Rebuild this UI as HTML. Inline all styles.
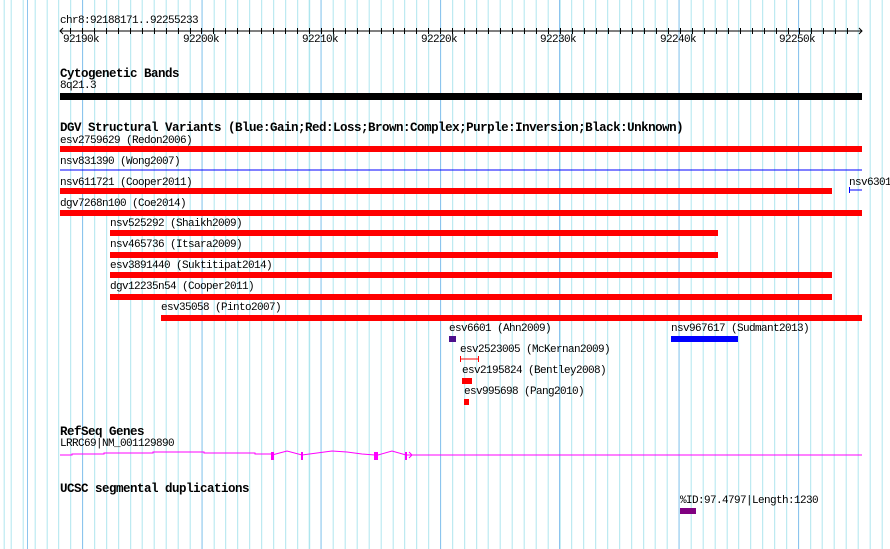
<!DOCTYPE html>
<html><head><meta charset="utf-8"><style>
html,body{margin:0;padding:0}
body{width:890px;height:549px;position:relative;overflow:hidden;background:#fff;font-family:"Liberation Mono","DejaVu Sans Mono",monospace;font-size:11px;letter-spacing:-0.6px;color:#000}
#grid{position:absolute;left:0;top:0;width:890px;height:549px;
background-image:repeating-linear-gradient(to right,#8cc4ee 0,#8cc4ee 1px,transparent 1px,transparent 119.3px),repeating-linear-gradient(to right,#aee6ee 0,#aee6ee 1px,transparent 1px,transparent 11.93px);
background-position:82px 0,10.7px 0;}
.t{position:absolute;line-height:11px;white-space:pre}
.h{position:absolute;line-height:13px;font-weight:bold;font-size:12.5px;letter-spacing:-0.5px;white-space:pre}
.b{position:absolute}
</style></head><body>
<div id="grid"></div>
<svg class="b" style="left:0;top:0" width="890" height="549">
<line x1="60" y1="31" x2="862" y2="31" stroke="#000"/>
<path d="M63 28L60 31L63 34M859 28L862 31L859 34" stroke="#000" fill="none"/>
<g stroke="#000">
<line x1="70.5" y1="28" x2="70.5" y2="34"/><line x1="82.5" y1="28" x2="82.5" y2="34"/>
<line x1="94.5" y1="28" x2="94.5" y2="34"/><line x1="106.5" y1="28" x2="106.5" y2="34"/>
<line x1="118.5" y1="28" x2="118.5" y2="34"/><line x1="130.5" y1="28" x2="130.5" y2="34"/>
<line x1="142.5" y1="28" x2="142.5" y2="34"/><line x1="154.5" y1="28" x2="154.5" y2="34"/>
<line x1="166.5" y1="28" x2="166.5" y2="34"/><line x1="178.5" y1="28" x2="178.5" y2="34"/>
<line x1="190.5" y1="28" x2="190.5" y2="34"/><line x1="201.5" y1="28" x2="201.5" y2="34"/>
<line x1="213.5" y1="28" x2="213.5" y2="34"/><line x1="225.5" y1="28" x2="225.5" y2="34"/>
<line x1="237.5" y1="28" x2="237.5" y2="34"/><line x1="249.5" y1="28" x2="249.5" y2="34"/>
<line x1="261.5" y1="28" x2="261.5" y2="34"/><line x1="273.5" y1="28" x2="273.5" y2="34"/>
<line x1="285.5" y1="28" x2="285.5" y2="34"/><line x1="297.5" y1="28" x2="297.5" y2="34"/>
<line x1="309.5" y1="28" x2="309.5" y2="34"/><line x1="321.5" y1="28" x2="321.5" y2="34"/>
<line x1="333.5" y1="28" x2="333.5" y2="34"/><line x1="345.5" y1="28" x2="345.5" y2="34"/>
<line x1="357.5" y1="28" x2="357.5" y2="34"/><line x1="369.5" y1="28" x2="369.5" y2="34"/>
<line x1="381.5" y1="28" x2="381.5" y2="34"/><line x1="393.5" y1="28" x2="393.5" y2="34"/>
<line x1="404.5" y1="28" x2="404.5" y2="34"/><line x1="416.5" y1="28" x2="416.5" y2="34"/>
<line x1="428.5" y1="28" x2="428.5" y2="34"/><line x1="440.5" y1="28" x2="440.5" y2="34"/>
<line x1="452.5" y1="28" x2="452.5" y2="34"/><line x1="464.5" y1="28" x2="464.5" y2="34"/>
<line x1="476.5" y1="28" x2="476.5" y2="34"/><line x1="488.5" y1="28" x2="488.5" y2="34"/>
<line x1="500.5" y1="28" x2="500.5" y2="34"/><line x1="512.5" y1="28" x2="512.5" y2="34"/>
<line x1="524.5" y1="28" x2="524.5" y2="34"/><line x1="536.5" y1="28" x2="536.5" y2="34"/>
<line x1="548.5" y1="28" x2="548.5" y2="34"/><line x1="560.5" y1="28" x2="560.5" y2="34"/>
<line x1="572.5" y1="28" x2="572.5" y2="34"/><line x1="584.5" y1="28" x2="584.5" y2="34"/>
<line x1="596.5" y1="28" x2="596.5" y2="34"/><line x1="608.5" y1="28" x2="608.5" y2="34"/>
<line x1="620.5" y1="28" x2="620.5" y2="34"/><line x1="632.5" y1="28" x2="632.5" y2="34"/>
<line x1="644.5" y1="28" x2="644.5" y2="34"/><line x1="656.5" y1="28" x2="656.5" y2="34"/>
<line x1="668.5" y1="28" x2="668.5" y2="34"/><line x1="680.5" y1="28" x2="680.5" y2="34"/>
<line x1="692.5" y1="28" x2="692.5" y2="34"/><line x1="704.5" y1="28" x2="704.5" y2="34"/>
<line x1="716.5" y1="28" x2="716.5" y2="34"/><line x1="728.5" y1="28" x2="728.5" y2="34"/>
<line x1="740.5" y1="28" x2="740.5" y2="34"/><line x1="752.5" y1="28" x2="752.5" y2="34"/>
<line x1="764.5" y1="28" x2="764.5" y2="34"/><line x1="776.5" y1="28" x2="776.5" y2="34"/>
<line x1="788.5" y1="28" x2="788.5" y2="34"/><line x1="799.5" y1="28" x2="799.5" y2="34"/>
<line x1="811.5" y1="28" x2="811.5" y2="34"/><line x1="823.5" y1="28" x2="823.5" y2="34"/>
<line x1="835.5" y1="28" x2="835.5" y2="34"/><line x1="847.5" y1="28" x2="847.5" y2="34"/>
</g>
<polyline points="60,455 72,455 72,454 104,454 104,453 153,453 153,452 204,452 204,453 255,453 255,454 272,454" stroke="#f0f" fill="none"/>
<polyline points="272,455 287,451 302,455 317,453 332,451 347,452 362,454 375,455" stroke="#f0f" fill="none"/>
<polyline points="378,455 392,451 406,455 862,455" stroke="#f0f" fill="none"/>
<rect x="271" y="452" width="3" height="8" fill="#f0f"/>
<rect x="301" y="452" width="2" height="8" fill="#f0f"/>
<rect x="374" y="452" width="4" height="8" fill="#f0f"/>
<rect x="405" y="452" width="2" height="8" fill="#f0f"/>
<path d="M409 452L412 455L409 458" stroke="#f0f" fill="none"/>
<rect x="449" y="336" width="7" height="6" fill="#4b0f8c"/>
<path d="M460.5 356v6M478.5 356v6M460 359h19" stroke="#f00" fill="none"/>
<rect x="462" y="378" width="10" height="6" fill="#f00"/>
<rect x="464" y="399" width="5" height="6" fill="#f00"/>
<rect x="671" y="336" width="67" height="6" fill="#00f"/>
<path d="M849.5 187v6M849 190h13" stroke="#00f" fill="none"/>
<rect x="60" y="169.5" width="802" height="1" fill="#00f"/>
<rect x="680" y="508" width="16" height="6" fill="#800080"/>
</svg>
<div class="t" style="left:60px;top:16px">chr8:92188171..92255233</div>
<div class="t" style="left:63px;top:35px">92190k</div>
<div class="t" style="left:183px;top:35px">92200k</div>
<div class="t" style="left:302px;top:35px">92210k</div>
<div class="t" style="left:421px;top:35px">92220k</div>
<div class="t" style="left:540px;top:35px">92230k</div>
<div class="t" style="left:660px;top:35px">92240k</div>
<div class="t" style="left:779px;top:35px">92250k</div>

<div class="h" style="left:60px;top:68px">Cytogenetic Bands</div>
<div class="t" style="left:60px;top:81px">8q21.3</div>
<div class="b" style="left:60px;top:93px;width:802px;height:7px;background:#000"></div>

<div class="h" style="left:60px;top:122px">DGV Structural Variants (Blue:Gain;Red:Loss;Brown:Complex;Purple:Inversion;Black:Unknown)</div>
<div class="t" style="left:60px;top:136px">esv2759629 (Redon2006)</div>
<div class="b" style="left:60px;top:146px;width:802px;height:6px;background:#f00"></div>
<div class="t" style="left:60px;top:157px">nsv831390 (Wong2007)</div>
<div class="t" style="left:60px;top:178px">nsv611721 (Cooper2011)</div>
<div class="b" style="left:60px;top:188px;width:772px;height:6px;background:#f00"></div>
<div class="t" style="left:849px;top:178px">nsv6301</div>
<div class="t" style="left:60px;top:199px">dgv7268n100 (Coe2014)</div>
<div class="b" style="left:60px;top:210px;width:802px;height:6px;background:#f00"></div>
<div class="t" style="left:110px;top:219px">nsv525292 (Shaikh2009)</div>
<div class="b" style="left:110px;top:230px;width:608px;height:6px;background:#f00"></div>
<div class="t" style="left:110px;top:240px">nsv465736 (Itsara2009)</div>
<div class="b" style="left:110px;top:252px;width:608px;height:6px;background:#f00"></div>
<div class="t" style="left:110px;top:261px">esv3891440 (Suktitipat2014)</div>
<div class="b" style="left:110px;top:272px;width:722px;height:6px;background:#f00"></div>
<div class="t" style="left:110px;top:282px">dgv12235n54 (Cooper2011)</div>
<div class="b" style="left:110px;top:294px;width:722px;height:6px;background:#f00"></div>
<div class="t" style="left:161px;top:303px">esv35058 (Pinto2007)</div>
<div class="b" style="left:161px;top:315px;width:701px;height:6px;background:#f00"></div>
<div class="t" style="left:449px;top:324px">esv6601 (Ahn2009)</div>
<div class="t" style="left:671px;top:324px">nsv967617 (Sudmant2013)</div>
<div class="t" style="left:460px;top:345px">esv2523005 (McKernan2009)</div>
<div class="t" style="left:462px;top:366px">esv2195824 (Bentley2008)</div>
<div class="t" style="left:464px;top:387px">esv995698 (Pang2010)</div>

<div class="h" style="left:60px;top:426px">RefSeq Genes</div>
<div class="t" style="left:60px;top:439px">LRRC69|NM_001129890</div>
<div class="h" style="left:60px;top:483px">UCSC segmental duplications</div>
<div class="t" style="left:680px;top:496px">%ID:97.4797|Length:1230</div>
</body></html>
